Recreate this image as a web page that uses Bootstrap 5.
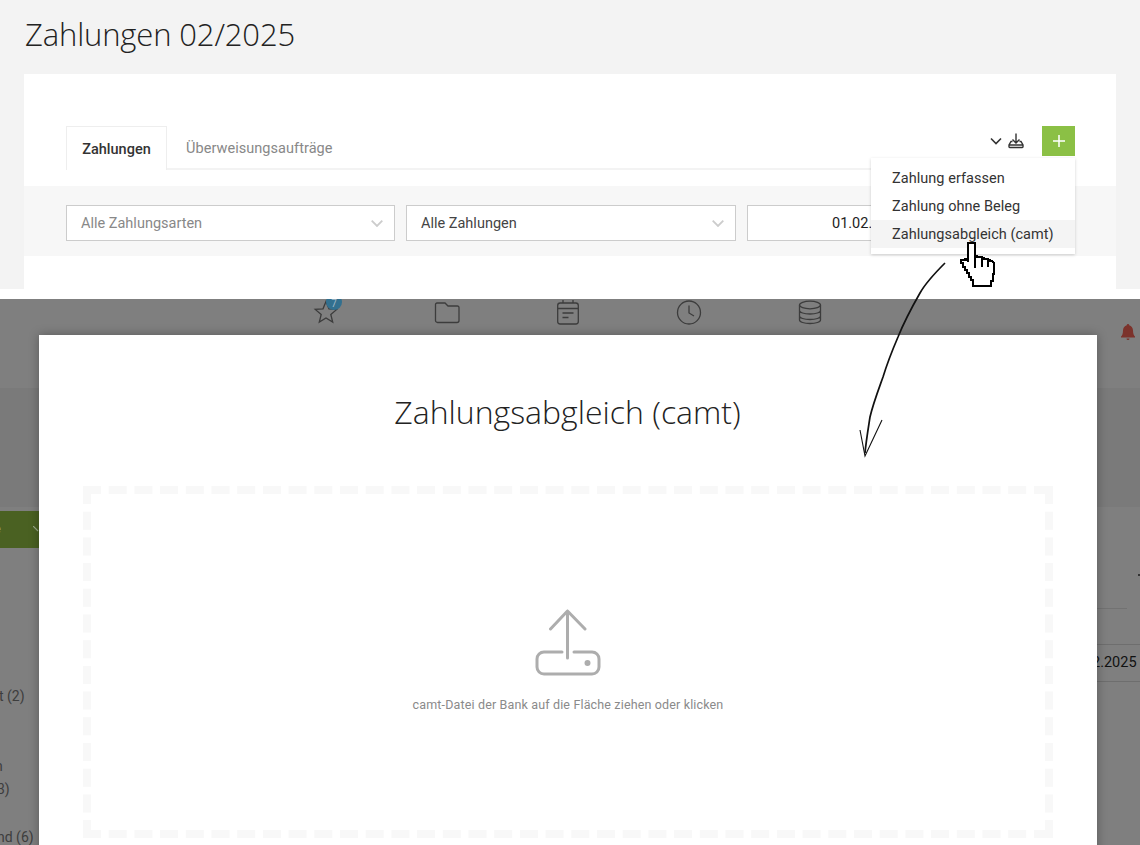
<!DOCTYPE html>
<html lang="de"><head><meta charset="utf-8"><title>Zahlungen</title>
<link rel="stylesheet" href="https://cdn.jsdelivr.net/npm/bootstrap@5.3.0/dist/css/bootstrap.min.css">
<style>
html,body{height:845px;overflow:hidden}
body{background:#fff;font-family:Roboto,sans-serif;position:relative;color:#333}
.top-zone{height:289px;background:#f3f3f3;padding:0 24px;overflow:hidden}
.page-title{font-family:"Open Sans",sans-serif;font-weight:300;font-size:31px;line-height:38px;padding-top:15px;height:74px;margin:0;color:#222;margin-left:1px;letter-spacing:-.14px}
.sheet{background:#fff;height:215px;padding-top:52px;position:relative}
.tabs-row{height:60px;padding:0 41px 0 42px;position:relative}
.tab-strip{border-bottom:2px solid #f3f3f3;height:44px;flex-grow:1}
.tab-on{width:101px;height:44px;border:1px solid #eee;border-bottom:0;background:#fff;font-size:14.5px;font-weight:500;color:#333;line-height:45px;text-align:center}
.tab-off{padding:0 19px;font-size:14.5px;color:#888;line-height:45px;letter-spacing:.05px}
.tool-icons{height:30px;gap:6px;margin-left:-70px;padding-right:18px;background:#fff}
.plus-btn{width:33px;height:30px;background:#8bc045;color:#fff;border-radius:0;padding:0;border:0}
.filter-band{background:#f7f7f7;height:70px;padding:19px 41px 0 42px;gap:11px;overflow:hidden}
.fake-select{height:36px;border:1px solid #ccc;background:#fff;font-size:14.5px;padding:1px 11px 0 14px;white-space:nowrap}
.sel-a{width:329px;color:#888}
.sel-b{width:330px;color:#444}
.sel-c{width:328px;color:#222;line-height:33px;padding-left:84px;overflow:hidden}
.menu-pop{position:absolute;left:847px;top:84px;width:204px;height:96px;background:#fff;box-shadow:0 1px 3px rgba(0,0,0,.18);padding:6px 0 0;z-index:3;font-size:14.5px;color:#333;letter-spacing:.04px}
.menu-pop div{height:28px;line-height:29px;padding-left:21px}
.menu-pop .hov{background:#f4f4f4}
.gap-band{height:10px;background:#fff}
.dark-zone{height:546px;background:#7f7f7f;position:relative;overflow:hidden}
.icon-bar{height:89px;padding-left:313px}
.nav-slot{width:121px;height:30px}
.lower-band{height:119px;background:#7a7a7a}
.bell-pos{position:absolute;left:1120px;top:25px}
.star-wrap{position:relative}
.star-badge{position:absolute;left:13px;top:-5px;width:16px;height:16px;border-radius:50%;background:#32708f;color:#a3b9c6;font-size:10px;line-height:20px;text-align:center}
.behind{position:absolute;font-size:14px;color:#3d3d3d;white-space:nowrap}
.b1{left:-1px;top:387px}
.b2{left:-5px;top:457px}
.b3{left:-3px;top:480px}
.b4{left:-3px;top:528px}
.green-stub{position:absolute;left:0;top:212px;width:39px;height:37px;background:#4a6122;color:#9aa88a;font-size:13px;line-height:36px}
.stub-chev{position:absolute;left:33px;top:15px}
.stub-letter{position:absolute;left:-6px;top:0}
.right-strip{position:absolute;left:1097px;top:345px;width:43px;height:38px;border-top:1px solid #6e6e6e;border-bottom:1px solid #6e6e6e;color:#111;font-size:14.5px;line-height:36px;white-space:nowrap;overflow:hidden;text-indent:-5px}
.right-rule{position:absolute;left:1097px;top:309px;width:30px;border-top:1px solid #727272}
.right-dash{position:absolute;left:1138px;top:275px;width:2px;height:2px;background:#333}
.modal-sheet{position:absolute;left:39px;top:36px;width:1058px;height:520px;background:#fff;box-shadow:0 0 10px rgba(0,0,0,.3);padding:0 44px;z-index:2}
.modal-head{font-family:"Open Sans",sans-serif;font-weight:300;font-size:32px;line-height:44px;text-align:center;color:#222;padding-top:55px;height:151px;margin:0;margin-left:-1px}
.drop-wrap{height:352px;position:relative;color:#8a8a8a;font-size:12.5px;letter-spacing:.15px;gap:20px}
.drop-frame{position:absolute;inset:0;width:100%;height:100%}
.drop-frame line{stroke:#f8f8f8;stroke-width:8;stroke-dasharray:18 7.7}
.drop-art,.drop-msg{position:relative}
.overlay-art{position:absolute;left:0;top:0;pointer-events:none;z-index:5}
</style></head><body>
<div class="top-zone">
<h1 class="page-title">Zahlungen 02/2025</h1>
<div class="sheet">
<div class="tabs-row d-flex align-items-start">
<div class="tab-on">Zahlungen</div>
<div class="tab-strip d-flex"><div class="tab-off">Überweisungsaufträge</div></div>
<div class="tool-icons d-flex align-items-center">
<svg width="12" height="8" viewBox="0 0 12 8" fill="none" stroke="#333" stroke-width="1.6"><path d="M1 1.500l5 5 5-5"/></svg>
<svg width="16" height="16" viewBox="0 0 16 16" fill="none" stroke="#333" stroke-width="1.4"><path d="M8 .5v9M4.500 6.500L8 10l3.500-3.500M4.500 8.500H3L1 12v1.800c0 .4.300.7.700.7h12.600c.4 0 .7-.3.700-.7V12l-2-3.500h-1.500M1 12h14"/></svg>
</div>
<button class="btn plus-btn d-flex align-items-center justify-content-center" aria-label="Neu"><svg width="12" height="12" viewBox="0 0 12 12" stroke="#fff" stroke-width="1.5"><path d="M6 0v12M0 6h12"/></svg></button>
</div>
<div class="filter-band d-flex">
<div class="fake-select sel-a d-flex justify-content-between align-items-center">Alle Zahlungsarten<svg width="12" height="7" viewBox="0 0 12 7" fill="none" stroke="#ccc" stroke-width="1.800"><path d="M.7.7L6 6l5.300-5.300"/></svg></div>
<div class="fake-select sel-b d-flex justify-content-between align-items-center">Alle Zahlungen<svg width="12" height="7" viewBox="0 0 12 7" fill="none" stroke="#ccc" stroke-width="1.800"><path d="M.7.7L6 6l5.300-5.300"/></svg></div>
<div class="fake-select sel-c">01.02.2025 – 28.02.2025</div>
</div>
<div class="menu-pop"><div>Zahlung erfassen</div><div>Zahlung ohne Beleg</div><div class="hov">Zahlungsabgleich (camt)</div></div>
</div>
</div>
<div class="gap-band"></div>
<div class="dark-zone">
<div class="icon-bar d-flex">
<div class="nav-slot star-wrap"><svg width="26" height="26" viewBox="0 0 26 26" fill="none" stroke="#3c3c3c" stroke-width="1.300"><path d="M13 2.500l3 7.300 7.800.6-6 5.100 1.900 7.600L13 18.900l-6.700 4.200 1.900-7.600-6-5.100 7.800-.6z"/></svg><span class="star-badge">7</span></div>
<div class="nav-slot"><svg width="26" height="26" viewBox="0 0 26 26" fill="none" stroke="#3c3c3c" stroke-width="1.300"><path d="M1.500 5.500A1.500 1.500 0 0 1 3 4h8l3 3h9.500A1.500 1.500 0 0 1 25 8.500v13a2 2 0 0 1-2 2H3.500a2 2 0 0 1-2-2z"/></svg></div>
<div class="nav-slot"><svg width="26" height="26" viewBox="0 0 26 26" fill="none" stroke="#3c3c3c" stroke-width="1.300"><rect x="2.700" y="4" width="20.600" height="21" rx="2.500"/><path d="M2.700 9.500h20.600M8 1v3M18 1v3M7.500 14h11M7.500 18.500h6"/></svg></div>
<div class="nav-slot"><svg width="26" height="26" viewBox="0 0 26 26" fill="none" stroke="#3c3c3c" stroke-width="1.300"><circle cx="13" cy="13.500" r="11.500"/><path d="M13 6.500V14l5 3"/></svg></div>
<div class="nav-slot"><svg width="26" height="26" viewBox="0 0 26 26" fill="none" stroke="#3c3c3c" stroke-width="1.300"><ellipse cx="13" cy="6" rx="10.500" ry="3.800"/><path d="M2.500 6v15c0 2 4.700 3.500 10.500 3.500S23.500 23 23.500 21V6M2.500 11.500c0 2 4.700 3.500 10.500 3.500s10.500-1.500 10.500-3.500M2.500 17c0 2 4.700 3.500 10.500 3.500s10.500-1.500 10.500-3.500"/></svg></div>
</div>
<div class="lower-band"></div>
<svg class="bell-pos" width="16" height="16" viewBox="0 0 16 16" fill="#7c322b"><path d="M8 0a1.200 1.200 0 0 1 1.200 1.300C11.600 1.900 13 4 13 6.500c0 3.500 1 5 2 6v1H1v-1c1-1 2-2.500 2-6C3 4 4.400 1.900 6.800 1.300A1.200 1.200 0 0 1 8 0zM6.500 14.500h3a1.500 1.500 0 0 1-3 0z"/></svg>
<div class="green-stub"><span class="stub-letter">e</span><svg class="stub-chev" width="6" height="6" viewBox="0 0 6 6" fill="none" stroke="#9aa88a" stroke-width="1.200"><path d="M0 0l5 5"/></svg></div>
<div class="behind b1">t (2)</div>
<div class="behind b2">n</div>
<div class="behind b3">3)</div>
<div class="behind b4">nd (6)</div>
<div class="right-rule"></div>
<div class="right-dash"></div>
<div class="right-strip">2.2025</div>
<div class="modal-sheet">
<h2 class="modal-head">Zahlungsabgleich (camt)</h2>
<div class="drop-wrap d-flex flex-column align-items-center justify-content-center">
<svg class="drop-frame" viewBox="0 0 970 352"><line x1="0" y1="4" x2="970" y2="4"/><line x1="0" y1="348" x2="970" y2="348"/><line x1="4" y1="0" x2="4" y2="352"/><line x1="966" y1="0" x2="966" y2="352"/></svg>
<svg class="drop-art" width="66" height="67" viewBox="0 0 66 67" fill="none" stroke="#adadad" stroke-width="3" stroke-linecap="round" stroke-linejoin="round"><path d="M32.500 2v47M15.500 20L32.500 2l17.500 18M27 43H9a7 7 0 0 0-7 7v8a7 7 0 0 0 7 7h48a7 7 0 0 0 7-7v-8a7 7 0 0 0-7-7H39"/><circle cx="52.500" cy="54" r="1.500" fill="#adadad"/></svg>
<div class="drop-msg">camt-Datei der Bank auf die Fläche ziehen oder klicken</div>
</div>
</div>
</div>
<svg class="overlay-art" width="1140" height="845" viewBox="0 0 1140 845" fill="none">
<path d="M945 263C932 276 925 284 920 293C912 307 904 322 898 337C892 351 887 364 883 377C878 391 873 404 870 417C868 430 866 442 865 453" stroke="#111" stroke-width="1.700"/>
<path d="M860 430L865 456L882 420" stroke="#111" stroke-width="1.100"/>
<path shape-rendering="crispEdges" fill="#fff" stroke="#000" stroke-width="2" d="M968 243h7v13h2v1h5v1h2v1h4v1h2v1h2l2 2v11h-1v7h-2v5h-18v-6h-2v-3h-2v-4h-2v-3h-2v-3h-2v-4h-2v-3h4v-1h2v1h1v2z"/>
<path shape-rendering="crispEdges" stroke="#000" stroke-width="1.500" d="M975 257v11M982 258v9M988 260v7"/>
</svg>
</body></html>
